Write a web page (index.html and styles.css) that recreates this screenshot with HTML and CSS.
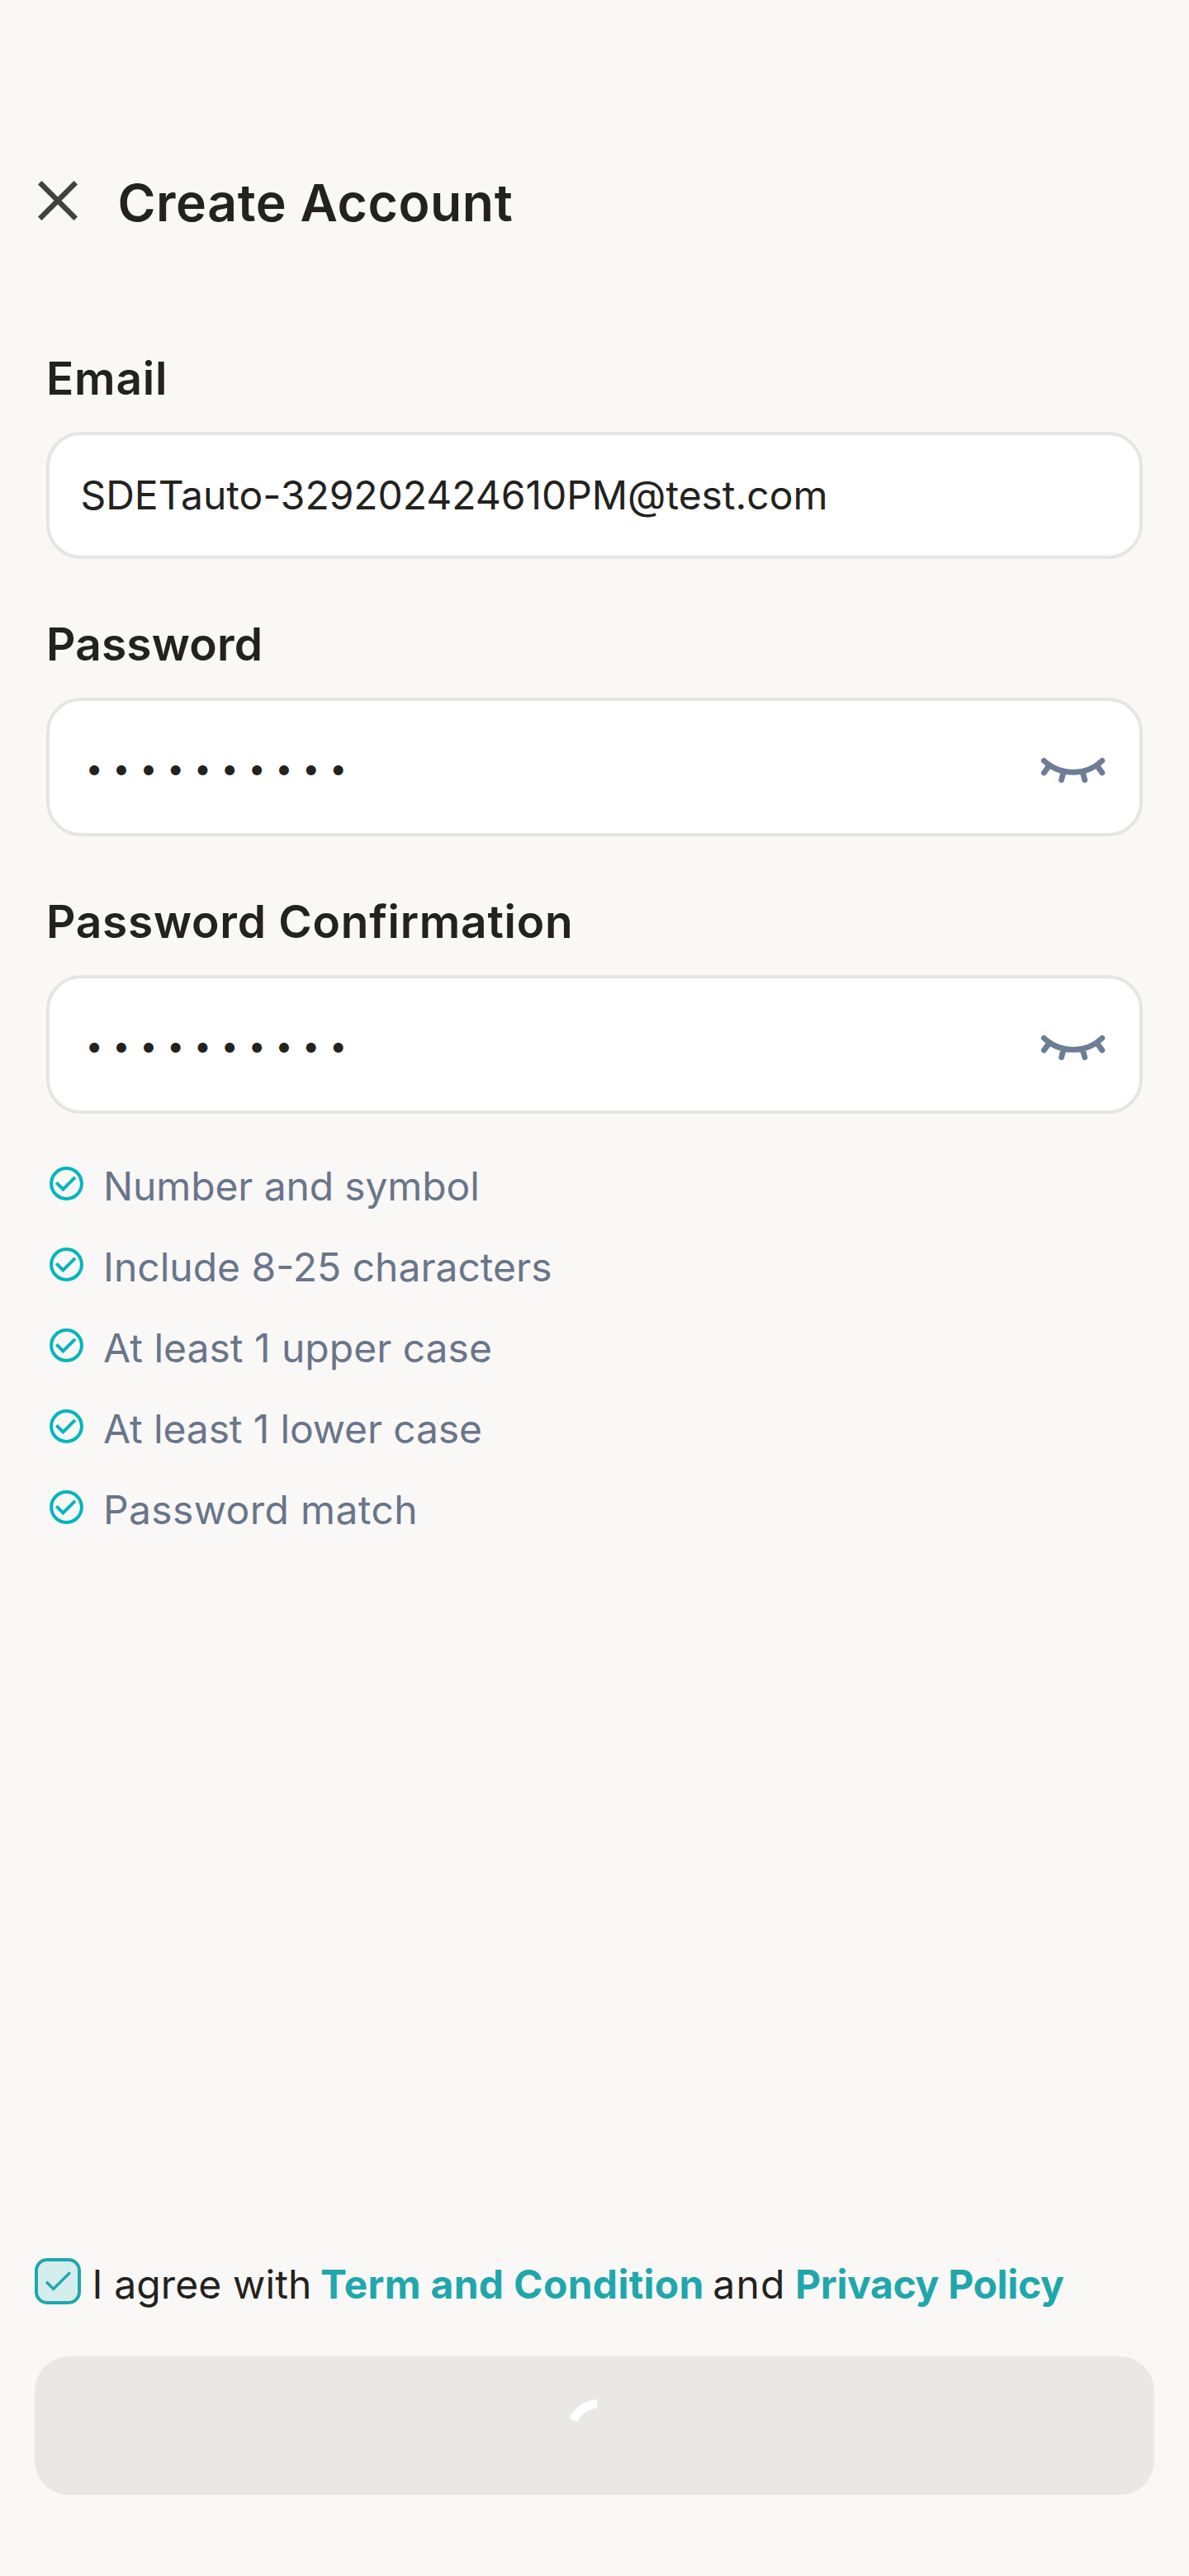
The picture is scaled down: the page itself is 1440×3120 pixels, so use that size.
FILE: index.html
```
<!DOCTYPE html>
<html lang="en">
<head>
<meta charset="utf-8">
<title>Create Account</title>
<link rel="stylesheet" href="styles.css">
</head>
<body>
<svg width="0" height="0" class="defs">
  <symbol id="eye-closed" viewBox="0 -8 78 38">
    <path d="M3.4 3.4A51.2 51.2 0 0 0 73.8 3.4M9 10.3L3.4 18M27.2 16.5L24.5 26.6M50 16.5L52.8 26.6M68.3 10.3L73.8 18" fill="none" stroke="currentColor" stroke-width="6.8" stroke-linecap="round"/>
  </symbol>
  <symbol id="check-circle" viewBox="0 0 41 41">
    <circle cx="20.5" cy="20.5" r="18.4" fill="none" stroke="currentColor" stroke-width="4"/>
    <path d="M8.3 19.3L16.4 27.4L31 12.9" fill="none" stroke="currentColor" stroke-width="4"/>
  </symbol>
</svg>
<main class="screen">
  <header class="header">
    <svg class="close" viewBox="0 0 48 48"><path d="M2.2 2.2L45.8 45.8M45.8 2.2L2.2 45.8" stroke="currentColor" stroke-width="6.4"/></svg>
    <h1 class="title">Create Account</h1>
  </header>
  <form class="form">
    <div class="group">
      <label class="label label-email">Email</label>
      <div class="field field-email"><span class="value">SDETauto-329202424610PM@test.com</span></div>
    </div>
    <div class="group">
      <label class="label label-password">Password</label>
      <div class="field"><span class="mask">••••••••••</span><svg class="eye"><use href="#eye-closed"/></svg></div>
    </div>
    <div class="group">
      <label class="label label-confirm">Password Confirmation</label>
      <div class="field"><span class="mask">••••••••••</span><svg class="eye"><use href="#eye-closed"/></svg></div>
    </div>
  </form>
  <ul class="rules">
    <li class="rule"><svg class="tick"><use href="#check-circle"/></svg><span class="tight">Number and symbol</span></li>
    <li class="rule"><svg class="tick"><use href="#check-circle"/></svg><span>Include 8-25 characters</span></li>
    <li class="rule"><svg class="tick"><use href="#check-circle"/></svg><span>At least 1 upper case</span></li>
    <li class="rule"><svg class="tick"><use href="#check-circle"/></svg><span class="tight">At least 1 lower case</span></li>
    <li class="rule"><svg class="tick"><use href="#check-circle"/></svg><span class="loose">Password match</span></li>
  </ul>
  <footer class="footer">
    <div class="agree">
      <span class="checkbox"><svg class="checkmark" viewBox="0 0 56 56"><path d="M14.2 28.8L22.7 37.4L42.8 17.4" fill="none" stroke="currentColor" stroke-width="3.4"/></svg></span>
      <p class="terms"><span>I agree with</span><a class="link link-terms">Term and Condition</a><span class="and">and</span><a class="link link-privacy">Privacy Policy</a></p>
    </div>
    <div class="submit"><svg class="spinner" viewBox="0 0 96 96"><path d="M22.2 41.5A35.3 35.3 0 0 1 51.2 21.2" fill="none" stroke="#fff" stroke-width="10.6"/></svg></div>
  </footer>
</main>
</body>
</html>
```

FILE: styles.css
```
* { box-sizing: border-box; margin: 0; padding: 0; }
body { background: #f9f8f6; color: #23221e; font-family: Inter, "Liberation Sans", sans-serif; }
.defs { display: block; }
.screen { width: 1440px; height: 3120px; display: flex; flex-direction: column; padding-top: 203px; }
.header { display: flex; align-items: flex-start; gap: 48.5px; padding-left: 46px; height: 84px; }
.close { width: 48px; height: 48px; margin-top: 16px; color: #42413e; }
.title { font-size: 62.5px; line-height: 84px; font-weight: 600; letter-spacing: 0.55px; }
.form { display: flex; flex-direction: column; gap: 70px; padding: 138px 56px 0; }
.group { display: flex; flex-direction: column; gap: 32px; }
.label { font-size: 55px; line-height: 66px; font-weight: 600; }
.label-email { letter-spacing: 0.78px; }
.label-password { letter-spacing: 0.18px; }
.label-confirm { letter-spacing: 0.74px; }
.field { height: 168px; border: 4px solid #e5e5e3; border-radius: 42px; background: #fff; display: flex; align-items: center; justify-content: space-between; padding: 0 41px 0 37.5px; }
.field-email { height: 154px; }
.value { font-size: 48px; line-height: 58px; letter-spacing: -0.04px; }
.mask { font-size: 38px; line-height: 46px; letter-spacing: 11.45px; padding: 2px 0 0 6px; }
.eye { width: 78px; height: 38px; color: #6c7d96; }
.rules { list-style: none; display: flex; flex-direction: column; gap: 40px; padding: 58.5px 60px 0; }
.rule { display: flex; align-items: flex-start; gap: 24px; font-size: 48px; line-height: 58px; color: #69758a; }
.tick { width: 41px; height: 41px; margin-top: 5.5px; color: #00b6bd; }
.tight { letter-spacing: -0.13px; }
.loose { letter-spacing: 0.38px; }
.footer { margin-top: auto; padding: 0 42px 98px; display: flex; flex-direction: column; gap: 58px; }
.agree { display: flex; align-items: flex-start; gap: 13.6px; height: 61px; }
.checkbox { width: 56px; height: 56px; border: 4px solid #1fa7ad; border-radius: 15px; background: #d3eeed; color: #1fa7ad; }
.checkmark { display: block; width: 56px; height: 56px; margin: -4px; }
.terms { display: flex; gap: 10.5px; font-size: 48px; line-height: 58px; letter-spacing: 0.12px; margin-top: 2.5px; white-space: nowrap; }
.link { font-weight: 700; color: #1fa7ad; }
.link-terms { letter-spacing: 0.3px; }
.and { letter-spacing: 1.2px; }
.link-privacy { letter-spacing: -0.35px; margin-left: 1px; }
.submit { height: 168px; border-radius: 42px; background: #e9e8e4; display: flex; align-items: center; justify-content: center; }
.spinner { width: 96px; height: 96px; }
```
